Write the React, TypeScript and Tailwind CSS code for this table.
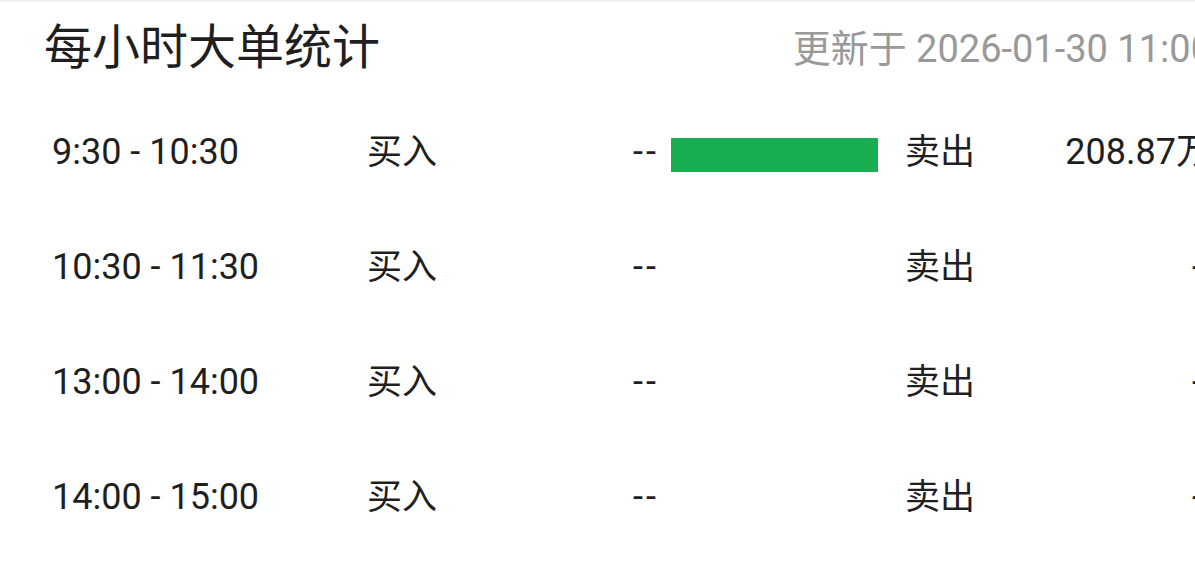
const rows = [
  { time: "9:30 - 10:30", buy: "--", bar: 207, sell: "208.87万" },
  { time: "10:30 - 11:30", buy: "--", bar: 0, sell: "--" },
  { time: "13:00 - 14:00", buy: "--", bar: 0, sell: "--" },
  { time: "14:00 - 15:00", buy: "--", bar: 0, sell: "--" },
]

const App = () => {
  return (
    <div className="w-[1195px] h-[570px] overflow-hidden bg-white border-t-2 border-[#f2f2f2] font-['Roboto','Noto_Sans_CJK_SC',sans-serif] text-[#1f1f1f]">
      <div className="w-[1212px]">
        <div className="h-[89px] flex items-start justify-between pl-[44px] pt-[17px]">
          <h1 className="text-[48px] leading-none font-['Noto_Sans_CJK_SC',sans-serif]">每小时大单统计</h1>
          <p className="mt-[8px] text-[38px] leading-none text-[#999999] whitespace-nowrap">
            <span className="font-['Noto_Sans_CJK_SC',sans-serif]">更新于</span> 2026-01-30 11:00
          </p>
        </div>
        {rows.map((r) => (
          <div key={r.time} className="h-[115px] flex items-center text-[36px] leading-none">
            <span className="w-[367px] pl-[52px] mt-[6px]">{r.time}</span>
            <span className="w-[266px] text-[35px] font-['Noto_Sans_CJK_SC',sans-serif]">买入</span>
            <span className="w-[38px] mt-[6px] tracking-[3px]">{r.buy}</span>
            <div className="w-[234px] h-[34px] mt-[12px]">
              {r.bar > 0 && <div className="h-full bg-[#1aae52]" style={{ width: r.bar }} />}
            </div>
            <span className="text-[35px] font-['Noto_Sans_CJK_SC',sans-serif]">卖出</span>
            <span className="flex-1 text-right mt-[6px]">{r.sell}</span>
          </div>
        ))}
      </div>
    </div>
  )
}

export default App
